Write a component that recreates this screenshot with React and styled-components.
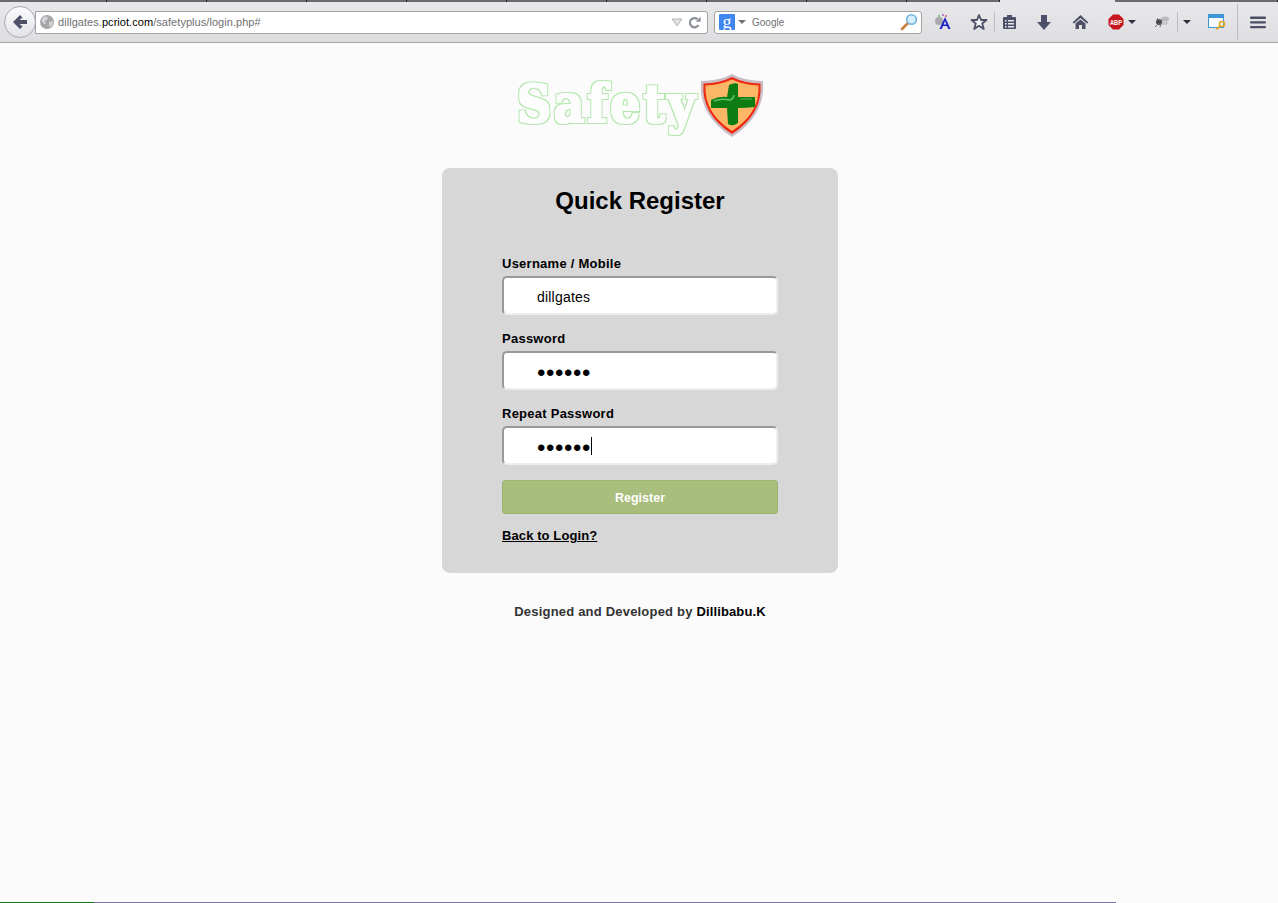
import styled, { createGlobalStyle } from "styled-components";

const GlobalStyle = createGlobalStyle`
  html, body {
    margin: 0;
    padding: 0;
    background: #fbfbfb;
    font-family: "Liberation Sans", Arial, sans-serif;
  }
  * { box-sizing: border-box; }
`;

const Shell = styled.div`
  display: flex;
  flex-direction: column;
  width: 1278px;
  height: 903px;
  overflow: hidden;
`;

const TabStrip = styled.div`
  display: flex;
  height: 2px;
  background: #e6e6e9;
`;

const TabEdge = styled.div`
  width: ${props => props.$w}px;
  height: ${props => (props.$active ? 0 : 2)}px;
  background: #6b6b70;
  border-right: 1px solid #222;
`;

const Toolbar = styled.div`
  display: flex;
  align-items: center;
  height: 41px;
  padding-left: 4px;
  background: linear-gradient(#e8e8eb, #dedee1);
  border-bottom: 1px solid #a6a6a8;
`;

const BackButton = styled.div`
  position: relative;
  z-index: 1;
  display: flex;
  align-items: center;
  justify-content: center;
  flex: none;
  width: 32px;
  height: 32px;
  margin-right: -1px;
  border-radius: 50%;
  border: 1px solid #a7a9b6;
  background: linear-gradient(#fbfbfc, #e2e3e8);
`;

const Bar = styled.div`
  display: flex;
  align-items: center;
  flex: none;
  width: ${props => props.$w}px;
  height: 23px;
  margin-right: ${props => props.$mr || 0}px;
  padding: ${props => props.$pad};
  background: #fff;
  border: 1px solid #a3a3a6;
  border-radius: ${props => props.$radius};
  font-size: 11px;
  color: #6f7072;
`;

const UrlText = styled.span`
  flex: 1;
  margin-left: 4px;
  white-space: nowrap;
  letter-spacing: 0.05px;
`;

const Host = styled.span`
  color: #000;
`;

const SearchLogo = styled.span`
  display: flex;
  align-items: center;
  justify-content: center;
  width: 16px;
  height: 16px;
  border-radius: 1px;
  background: #3f86ee;
  color: #fff;
  font-family: "Liberation Serif", serif;
  font-size: 18px;
  line-height: 13px;
`;

const SearchArrow = styled.span`
  display: flex;
  margin-left: 3px;
`;

const SearchText = styled.span`
  flex: 1;
  margin-left: 6px;
  font-size: 10px;
`;

const Slot = styled.div`
  display: flex;
  align-items: center;
  justify-content: ${props => (props.$start ? "flex-start" : "center")};
  gap: 4px;
  flex: none;
  width: ${props => props.$w}px;
  height: 24px;
  padding-left: ${props => props.$pl || 0}px;
`;

const Divider = styled.div`
  flex: none;
  width: 1px;
  height: ${props => props.$h || 20}px;
  background: #bdbdc2;
`;

const Caret = styled.span`
  width: 0;
  height: 0;
  border-left: 4px solid transparent;
  border-right: 4px solid transparent;
  border-top: 4px solid ${props => props.$color || "#2f3040"};
`;

const Page = styled.main`
  display: flex;
  flex: 1;
  flex-direction: column;
  align-items: center;
  padding: 30px 0 0 2px;
`;

const Logo = styled.div`
  display: flex;
  align-items: center;
  height: 65px;
  margin-bottom: 30px;
`;

const LogoMark = styled.span`
  display: block;
  width: 184px;
  margin-bottom: 4px;
  padding-left: 1px;
  white-space: nowrap;
  font-family: "DejaVu Serif", serif;
  font-weight: 700;
  font-size: 52px;
  letter-spacing: 3px;
  line-height: 60px;
  color: #fdfdfd;
  transform: scaleX(0.91);
  transform-origin: left center;
  filter: url(#logo-outline);
`;

const FilterDefs = styled.svg`
  position: absolute;
  width: 0;
  height: 0;
`;

const Card = styled.section`
  width: 396px;
  height: 405px;
  padding: 18px 60px 0;
  background: #d7d7d8;
  border-radius: 8px;
`;

const Title = styled.h1`
  margin: 0 0 38px;
  font-size: 24px;
  line-height: 30px;
  font-weight: 700;
  text-align: center;
  color: #000;
`;

const Form = styled.form`
  display: flex;
  flex-direction: column;
  gap: 14px;
`;

const Field = styled.div`
  display: flex;
  flex-direction: column;
  gap: 3px;
`;

const Label = styled.label`
  height: 19px;
  font-size: 13px;
  line-height: 20px;
  font-weight: 700;
  letter-spacing: 0.25px;
  color: #000;
`;

const InputWrap = styled.div`
  position: relative;
`;

const Input = styled.input`
  display: block;
  width: 276px;
  height: 39px;
  padding: ${props => (props.type === "password" ? "4px" : "2px")} 10px 0 33px;
  background: #fff;
  border-style: solid;
  border-width: 2px;
  border-color: #999 #eee #eee #999;
  border-radius: 5px;
  outline: none;
  font-family: "Liberation Sans", Arial, sans-serif;
  font-size: ${props => (props.type === "password" ? "24px" : "14px")};
  color: #000;
  letter-spacing: ${props => (props.type === "password" ? "0.6px" : "0.2px")};
`;

const TextCaret = styled.span`
  position: absolute;
  left: 89px;
  top: 11px;
  width: 1px;
  height: 18px;
  background: #000;
`;

const SubmitButton = styled.button`
  width: 276px;
  height: 34px;
  margin-top: 1px;
  padding-top: 3px;
  background: #a9bd7c;
  border: 1px solid #9db46f;
  border-radius: 3px;
  font-family: "Liberation Sans", Arial, sans-serif;
  font-size: 12.5px;
  font-weight: 700;
  color: #fff;
`;

const BackLink = styled.a`
  display: block;
  margin-top: 13px;
  font-size: 13px;
  line-height: 18px;
  font-weight: 700;
  letter-spacing: 0.1px;
  color: #000;
  text-decoration: underline;
`;

const Credit = styled.p`
  margin: 30px 0 0;
  font-size: 13px;
  line-height: 18px;
  font-weight: 700;
  letter-spacing: 0.2px;
  color: #333;
  text-align: center;
`;

const CreditName = styled.span`
  color: #000;
  letter-spacing: 0.13px;
`;

const StatusBar = styled.div`
  display: flex;
  flex: none;
  width: 1116px;
  height: 1px;
  background: #7a7aa0;
`;

const StatusProgress = styled.div`
  width: 94px;
  background: #0c7c0c;
`;

const BackArrow = () => (
  <svg width="18" height="18" viewBox="0 0 18 18">
    <path d="M9 2 L2 9 L9 16 L11.5 13.5 L8.5 11 H16 V7 H8.5 L11.5 4.5Z" fill="#4d5068" />
  </svg>
);

const Globe = () => (
  <svg width="14" height="14" viewBox="0 0 14 14">
    <circle cx="7" cy="7" r="7" fill="#a5a6a8" />
    <path d="M3 2 L7 1.5 L8 4 L5 6 L6 9 L4 9 L1.5 6Z M9 7 L13 6 L12.5 10 L9.5 12.5Z" fill="#d3d4d6" />
  </svg>
);

const DropTriangle = () => (
  <svg width="12" height="9" viewBox="0 0 12 9">
    <path d="M1 1 H11 L6 8Z" fill="#dfe1e3" stroke="#b4b6b9" />
  </svg>
);

const Reload = () => (
  <svg width="13" height="13" viewBox="0 0 13 13">
    <path d="M10.5 9 A4.6 4.6 0 1 1 9.5 3.2" fill="none" stroke="#8b9196" strokeWidth="2.2" />
    <path d="M7.6 5.8 H12.6 V0.8Z" fill="#8b9196" />
  </svg>
);

const Magnifier = () => (
  <svg width="18" height="18" viewBox="0 0 18 18">
    <path d="M8 10 L2 16" stroke="#c8803c" strokeWidth="2.6" strokeLinecap="round" />
    <circle cx="11.500" cy="6.500" r="4.800" fill="#d6eefb" stroke="#6fb2dc" strokeWidth="1.6" />
  </svg>
);

const TranslateIcon = () => (
  <svg width="18" height="18" viewBox="0 0 18 18">
    <circle cx="5" cy="8" r="4" fill="#a8a8ac" />
    <circle cx="5" cy="3" r="1" fill="#67b867" />
    <circle cx="9" cy="2" r="1" fill="#b25bc0" />
    <circle cx="12" cy="3" r="1" fill="#d05a5a" />
    <path d="M11 4 L16.500 16 H14.200 L13 13 H9 L7.800 16 H5.500Z M11 8 L9.700 11.400 H12.300Z" fill="#1c22c4" fillRule="evenodd" />
  </svg>
);

const Star = () => (
  <svg width="18" height="18" viewBox="0 0 18 18">
    <path d="M9 2 L11 7 H16.5 L12.2 10.5 L13.8 16 L9 12.8 L4.2 16 L5.8 10.5 L1.5 7 H7Z" fill="#f3f3f5" stroke="#4d5068" strokeWidth="1.8" strokeLinejoin="round" />
  </svg>
);

const Clipboard = () => (
  <svg width="15" height="16" viewBox="0 0 15 16">
    <path d="M2 3 H5 V1 H10 V3 H13 Q14 3 14 4 V14 Q14 15 13 15 H2 Q1 15 1 14 V4 Q1 3 2 3Z" fill="#4d5068" />
    <path d="M3 6 H4.5 V7.5 H3Z M6 6 H12 V7.5 H6Z M3 9 H4.5 V10.5 H3Z M6 9 H12 V10.5 H6Z M3 12 H4.5 V13.5 H3Z M6 12 H12 V13.5 H6Z" fill="#e6e6ea" />
  </svg>
);

const DownArrow = () => (
  <svg width="16" height="17" viewBox="0 0 16 17">
    <path d="M5 1 H11 V8 H15 L8 16 L1 8 H5Z" fill="#4d5068" />
  </svg>
);

const Home = () => (
  <svg width="17" height="16" viewBox="0 0 17 16">
    <path d="M8.5 1 L16.5 8.5 L15 9.5 L8.5 4 L2 9.5 L0.5 8.5Z" fill="#4d5068" />
    <path d="M3.5 9.5 L8.5 5.5 L13.5 9.5 V15 H10 V11 H7 V15 H3.5Z" fill="#4d5068" />
  </svg>
);

const AdblockIcon = () => (
  <svg width="16" height="16" viewBox="0 0 16 16">
    <path d="M5 0.5 H11 L15.5 5 V11 L11 15.5 H5 L0.5 11 V5Z" fill="#c8161d" />
    <text x="8" y="10.5" textAnchor="middle" fontSize="6.5" fontWeight="700" fontFamily="Liberation Sans Narrow, Liberation Sans" textLength="12" lengthAdjust="spacingAndGlyphs" fill="#fff">ABP</text>
  </svg>
);

const FlyIcon = () => (
  <svg width="16" height="14" viewBox="0 0 16 14">
    <ellipse cx="11" cy="4" rx="4" ry="2.5" fill="#b9b9bc" />
    <ellipse cx="10" cy="8" rx="4" ry="2" fill="#c9c9cc" />
    <circle cx="5" cy="7" r="3" fill="#4a4a4d" />
    <path d="M1 12 L5 8 M3 3 L6 6 M6 12 L7 8" stroke="#6d6d70" />
  </svg>
);

const WindowKey = () => (
  <svg width="18" height="18" viewBox="0 0 18 18">
    <rect x="0.5" y="1.5" width="15" height="13" fill="#f7fbfe" stroke="#3f96d6" />
    <rect x="1" y="2" width="14" height="3" fill="#3f96d6" />
    <circle cx="14" cy="11" r="2.5" fill="none" stroke="#e0a526" strokeWidth="1.6" />
    <path d="M12 13 L8.5 16.5" stroke="#e0a526" strokeWidth="1.8" />
  </svg>
);

const Hamburger = () => (
  <svg width="16" height="13" viewBox="0 0 16 13">
    <rect y="0.5" width="16" height="2.4" rx="1" fill="#4d5068" />
    <rect y="5.2" width="16" height="2.4" rx="1" fill="#4d5068" />
    <rect y="9.9" width="16" height="2.4" rx="1" fill="#4d5068" />
  </svg>
);

const Shield = () => (
  <svg width="64" height="65" viewBox="0 0 64 65">
    <path d="M32 1 Q44 8 63 8 Q66 42 32 64 Q-2 42 1 8 Q20 8 32 1Z" fill="#c9bcc4" />
    <path d="M32 4 Q44 10 60.500 10.500 Q63 41 32 61 Q1 41 3.500 10.500 Q20 10 32 4Z" fill="#ee2a12" />
    <path d="M32 6.500 Q44 12 58.500 12.500 Q60 40 32 58 Q4 40 5.500 12.500 Q20 12 32 6.500Z" fill="#fdb766" />
    <path d="M29 12 Q35 9 38 11 L38 24 H55 V34 Q47 35 38 35 L38 50 Q33 54 28 51 L27 35 H11 V27 Q19 23 27 24Z" fill="#0d7c12" />
    <path d="M14 28 Q22 25 29 27 Q33 27 34 22" fill="none" stroke="#63c06a" strokeWidth="1.6" />
    <path d="M40 26 H52" stroke="#4aa950" strokeWidth="1.2" />
  </svg>
);

const LogoFilter = () => (
  <FilterDefs aria-hidden="true">
    <filter id="logo-outline" x="-5%" y="-5%" width="110%" height="110%">
      <feMorphology in="SourceAlpha" operator="dilate" radius="1" result="inner" />
      <feMorphology in="SourceAlpha" operator="dilate" radius="1.8" result="outer" />
      <feFlood floodColor="#b4e7ae" />
      <feComposite in2="outer" operator="in" result="ring" />
      <feFlood floodColor="#fdfdfd" />
      <feComposite in2="inner" operator="in" result="body" />
      <feMerge>
        <feMergeNode in="ring" />
        <feMergeNode in="body" />
      </feMerge>
    </filter>
  </FilterDefs>
);

const tabEdges = [
  { w: 107 }, { w: 100 }, { w: 100 }, { w: 100 }, { w: 100 }, { w: 100 },
  { w: 100 }, { w: 100 }, { w: 100 }, { w: 93 }, { w: 115, active: true }, { w: 163 },
];

function App() {
  return (
    <Shell>
      <GlobalStyle />
      <LogoFilter />
      <TabStrip>
        {tabEdges.map((tab, i) => (
          <TabEdge key={i} $w={tab.w} $active={tab.active} />
        ))}
      </TabStrip>
      <Toolbar>
        <BackButton>
          <BackArrow />
        </BackButton>
        <Bar $w={673} $mr={6} $pad="0 2px 0 4px" $radius="0 3px 3px 0">
          <Globe />
          <UrlText>
            dillgates.<Host>pcriot.com</Host>/safetyplus/login.php#
          </UrlText>
          <DropTriangle />
          <Slot $w={22}>
            <Reload />
          </Slot>
        </Bar>
        <Bar $w={208} $mr={3} $pad="0 3px 0 4px" $radius="3px">
          <SearchLogo>g</SearchLogo>
          <SearchArrow>
            <Caret $color="#6f7072" />
          </SearchArrow>
          <SearchText>Google</SearchText>
          <Magnifier />
        </Bar>
        <Slot $w={36}><TranslateIcon /></Slot>
        <Slot $w={33} $pl={3}><Star /></Slot>
        <Divider />
        <Slot $w={28}><Clipboard /></Slot>
        <Slot $w={42}><DownArrow /></Slot>
        <Slot $w={30}><Home /></Slot>
        <Slot $w={42} $pl={13} $start><AdblockIcon /><Caret /></Slot>
        <Slot $w={40} $pl={10}><FlyIcon /></Slot>
        <Divider />
        <Slot $w={18}><Caret /></Slot>
        <Slot $w={41}><WindowKey /></Slot>
        <Divider $h={36} />
        <Slot $w={40}><Hamburger /></Slot>
      </Toolbar>
      <Page>
        <Logo>
          <LogoMark>Safety</LogoMark>
          <Shield />
        </Logo>
        <Card>
          <Title>Quick Register</Title>
          <Form>
            <Field>
              <Label>Username / Mobile</Label>
              <InputWrap>
                <Input type="text" defaultValue="dillgates" />
              </InputWrap>
            </Field>
            <Field>
              <Label>Password</Label>
              <InputWrap>
                <Input type="password" defaultValue="secret" />
              </InputWrap>
            </Field>
            <Field>
              <Label>Repeat Password</Label>
              <InputWrap>
                <Input type="password" defaultValue="secret" />
                <TextCaret />
              </InputWrap>
            </Field>
            <SubmitButton type="button">Register</SubmitButton>
          </Form>
          <BackLink href="#">Back to Login?</BackLink>
        </Card>
        <Credit>
          Designed and Developed by <CreditName>Dillibabu.K</CreditName>
        </Credit>
      </Page>
      <StatusBar>
        <StatusProgress />
      </StatusBar>
    </Shell>
  );
}

export default App;
